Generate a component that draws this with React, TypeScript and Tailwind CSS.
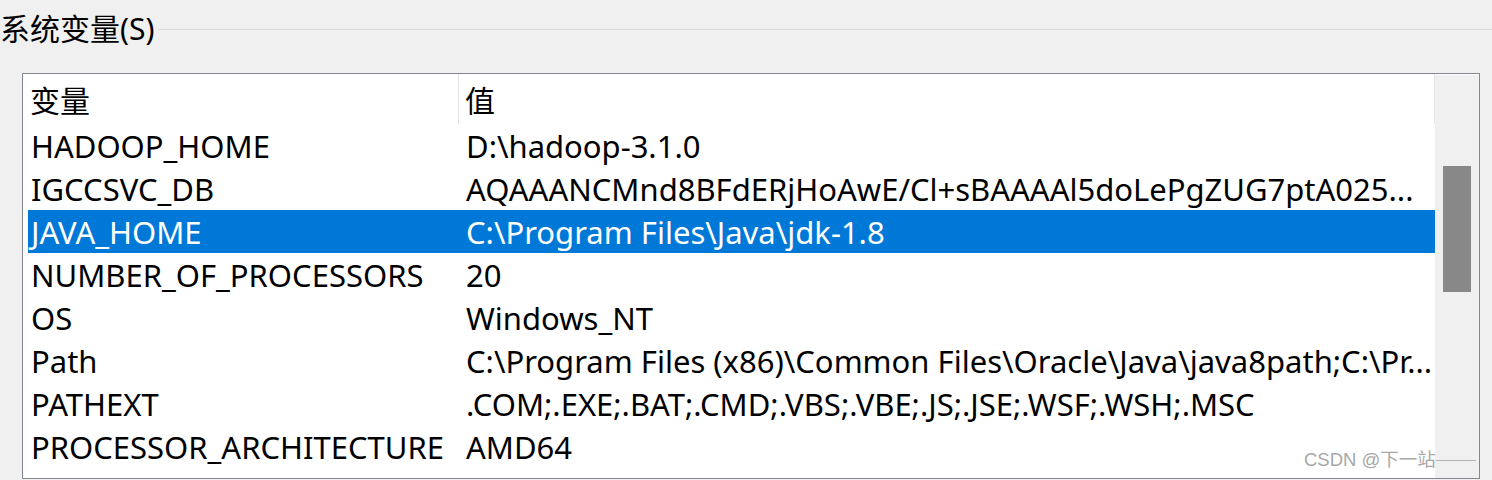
import React from "react";

const rows: [string, string][] = [
  ["HADOOP_HOME", "D:\\hadoop-3.1.0"],
  ["IGCCSVC_DB", "AQAAANCMnd8BFdERjHoAwE/Cl+sBAAAAl5doLePgZUG7ptA025..."],
  ["JAVA_HOME", "C:\\Program Files\\Java\\jdk-1.8"],
  ["NUMBER_OF_PROCESSORS", "20"],
  ["OS", "Windows_NT"],
  ["Path", "C:\\Program Files (x86)\\Common Files\\Oracle\\Java\\java8path;C:\\Pr..."],
  ["PATHEXT", ".COM;.EXE;.BAT;.CMD;.VBS;.VBE;.JS;.JSE;.WSF;.WSH;.MSC"],
  ["PROCESSOR_ARCHITECTURE", "AMD64"],
];

export default function App() {
  return (
    <div
      className="relative w-[1492px] h-[480px] overflow-hidden bg-[#f0f0f0] text-black"
      style={{ fontFamily: '"Noto Sans", "Noto Sans CJK SC", sans-serif' }}
    >
      <div className="flex items-center h-[58px]">
        <span className="text-[30px] leading-none whitespace-nowrap">系统变量(S)</span>
        <div className="ml-[4px] flex-1 h-px bg-[#dcdcdc]" />
      </div>
      <div className="mt-[15px] ml-[22px] w-[1458px] h-[406px] border border-[#828790] bg-white flex">
        <div className="flex-1 flex flex-col min-w-0">
          <div className="flex h-[50px] items-center text-[30px]">
            <div className="w-[436px] h-full pl-[7px] pt-[2px] flex items-center border-r border-[#e5e5e5]">变量</div>
            <div className="flex-1 h-full pl-[6px] pt-[2px] flex items-center border-r border-[#e5e5e5]">值</div>
          </div>
          {rows.map(([k, v], i) => (
            <div
              key={k}
              className={
                "ml-[5px] flex h-[43px] items-center text-[31px] leading-[42px] whitespace-nowrap " +
                (i === 2 ? "bg-[#0078d7] text-white" : "")
              }
            >
              <div className="w-[434px] pl-[3px] pt-[1px] shrink-0">{k}</div>
              <div className="flex-1 min-w-0 pl-[4px] pt-[1px]">{v}</div>
            </div>
          ))}
        </div>
        <div className="w-[44px] bg-[#f0f0f0] mt-[1px] flex flex-col items-center">
          <div className="mt-[91px] w-[28px] h-[126px] bg-[#888888]" />
        </div>
      </div>
      <div
        className="absolute left-[1304px] top-[451px] flex items-center text-[18.5px] leading-none text-[#a8a8a8] whitespace-nowrap"
        style={{ fontFamily: '"Liberation Sans", "Noto Sans CJK SC", sans-serif' }}
      >
        <span>CSDN @下一站</span>
        <span className="w-[40px] h-px bg-[#b4b4b4]" />
      </div>
    </div>
  );
}
